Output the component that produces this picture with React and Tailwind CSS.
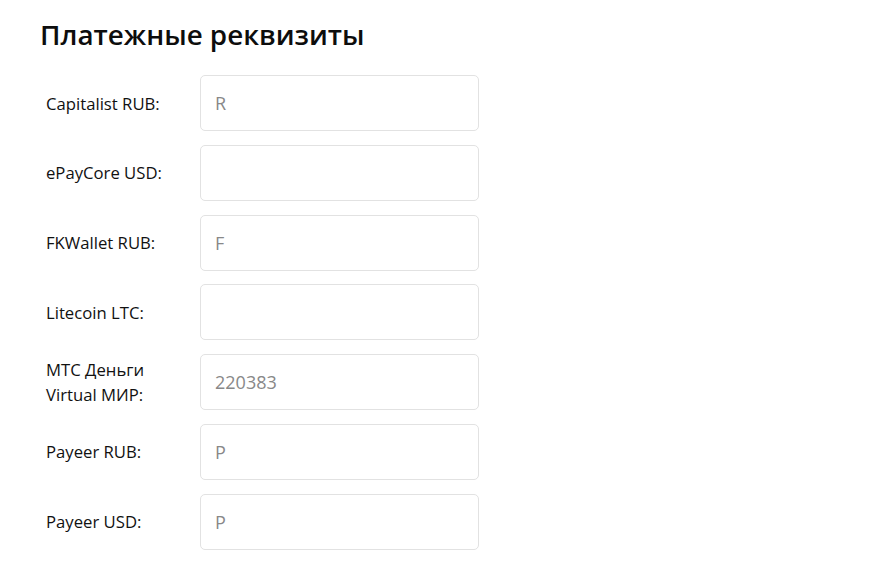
const rows = [
    { label: 'Capitalist RUB:', placeholder: 'R' },
    { label: 'ePayCore USD:', placeholder: '' },
    { label: 'FKWallet RUB:', placeholder: 'F' },
    { label: 'Litecoin LTC:', placeholder: '' },
    { label: 'МТС Деньги Virtual МИР:', placeholder: '220383' },
    { label: 'Payeer RUB:', placeholder: 'P' },
    { label: 'Payeer USD:', placeholder: 'P' },
];

export default function App() {
    return (
        <div className="min-h-screen bg-white font-['Open_Sans',sans-serif] text-[#111] px-10 pt-[14px]">
            <h1 className="text-[27.8px] font-semibold leading-[40px] text-[#0d0d0d]">Платежные реквизиты</h1>

            <div className="mt-[21px] flex flex-col gap-[13.8px]">
                {rows.map((row, i) => (
                    <div key={i} className="flex items-center">
                        <label className="w-[160px] pl-[6px] pr-[20px] text-[16.7px] leading-[25px] text-[#111]">
                            {row.label}
                        </label>
                        <input
                            type="text"
                            placeholder={row.placeholder}
                            className="w-[279px] h-[56px] px-[14px] border border-[#e2e2e2] rounded-[5px] text-[18px] text-[#333] placeholder-[#888] outline-none bg-white"
                        />
                    </div>
                ))}
            </div>
        </div>
    );
}
